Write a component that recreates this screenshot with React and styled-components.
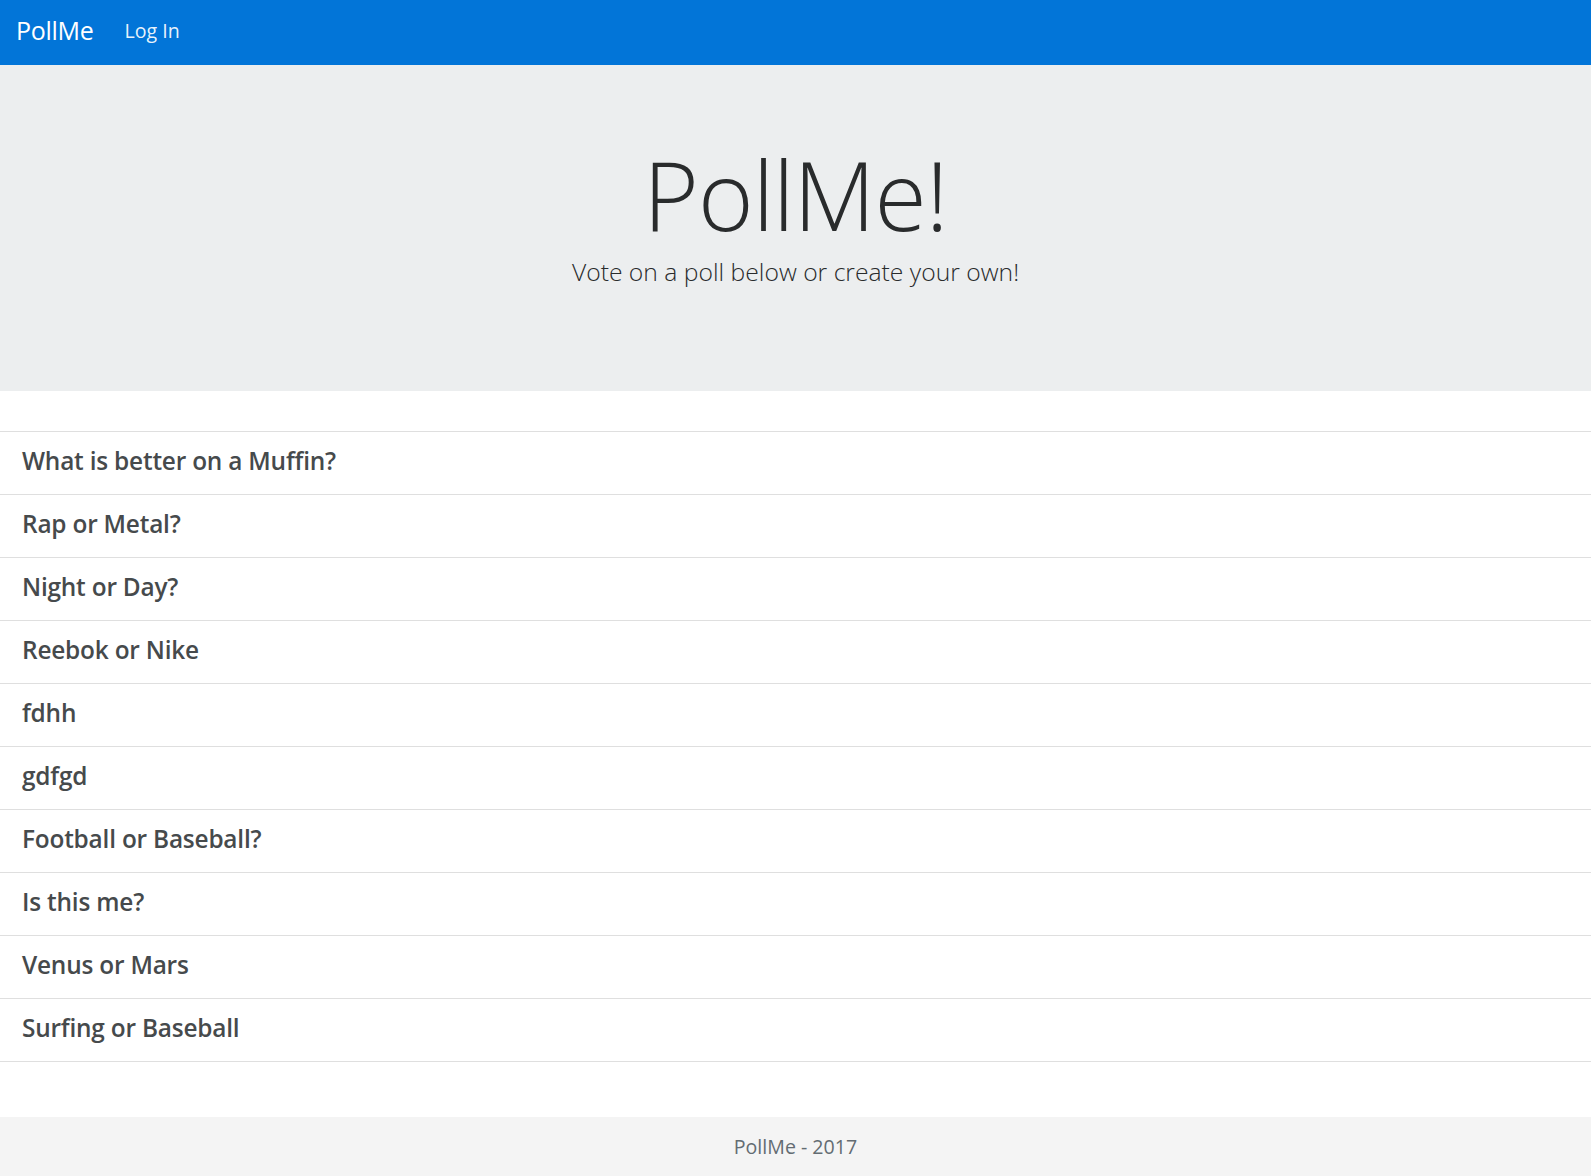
import styled, { createGlobalStyle } from "styled-components";

const GlobalStyle = createGlobalStyle`
  html, body {
    margin: 0;
    padding: 0;
    background: #fff;
    font-family: "Open Sans", "Noto Sans", sans-serif;
    color: #292b2c;
  }
  * { box-sizing: border-box; }
`;

const Navbar = styled.nav`
  height: 65px;
  background: #0275d8;
  display: flex;
  align-items: center;
  padding: 0 16px 4px;
`;

const Brand = styled.a`
  color: #fff;
  font-size: 25px;
  font-weight: 400;
  letter-spacing: -0.3px;
  text-decoration: none;
  line-height: 1;
  margin-right: 31px;
`;

const NavLink = styled.a`
  color: rgba(255, 255, 255, 0.92);
  font-size: 19.6px;
  text-decoration: none;
  line-height: 1;
`;

const Jumbotron = styled.header`
  height: 326px;
  background: #eceeef;
  display: flex;
  flex-direction: column;
  align-items: center;
  padding-top: 82px;
`;

const Title = styled.h1`
  margin: 0;
  font-size: 95px;
  font-weight: 300;
  line-height: 1;
  letter-spacing: -1px;
  color: #292b2c;
`;

const Lead = styled.p`
  margin: 13px 0 0;
  font-size: 24.7px;
  font-weight: 300;
  color: #292b2c;
`;

const Main = styled.main`
  padding: 40px 0 55px;
`;

const PollList = styled.ul`
  list-style: none;
  margin: 0;
  padding: 0;
  border-top: 1px solid #dfdfdf;
`;

const PollItem = styled.li`
  height: 63px;
  display: flex;
  align-items: center;
  padding: 0 22px 6px;
  border-bottom: 1px solid #dfdfdf;
`;

const PollTitle = styled.a`
  font-size: 24.4px;
  font-weight: 600;
  color: #464a4c;
  text-decoration: none;
  letter-spacing: -0.2px;
`;

const Footer = styled.footer`
  height: 59px;
  background: #f4f4f4;
  display: flex;
  align-items: center;
  justify-content: center;
  font-size: 19.6px;
  color: #636c72;
`;

const polls = [
  "What is better on a Muffin?",
  "Rap or Metal?",
  "Night or Day?",
  "Reebok or Nike",
  "fdhh",
  "gdfgd",
  "Football or Baseball?",
  "Is this me?",
  "Venus or Mars",
  "Surfing or Baseball",
];

export default function App() {
  return (
    <>
      <GlobalStyle />
      <Navbar>
        <Brand href="#">PollMe</Brand>
        <NavLink href="#">Log In</NavLink>
      </Navbar>
      <Jumbotron>
        <Title>PollMe!</Title>
        <Lead>Vote on a poll below or create your own!</Lead>
      </Jumbotron>
      <Main>
        <PollList>
          {polls.map((p, i) => (
            <PollItem key={i}>
              <PollTitle href="#">{p}</PollTitle>
            </PollItem>
          ))}
        </PollList>
      </Main>
      <Footer>PollMe - 2017</Footer>
    </>
  );
}
